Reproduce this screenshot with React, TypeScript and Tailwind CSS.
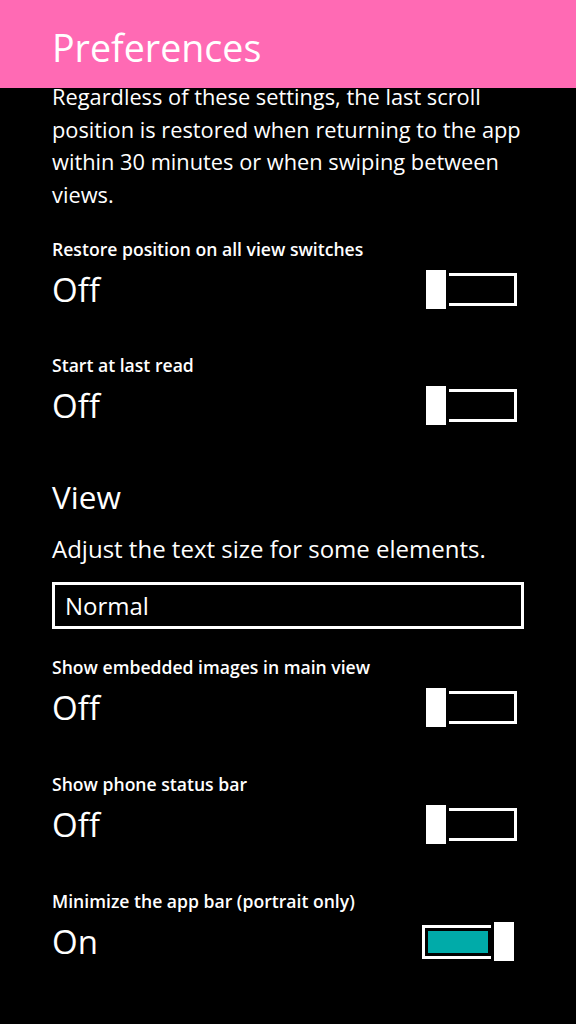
import React from 'react';

const font = { fontFamily: '"Open Sans", "Noto Sans", sans-serif' };

interface ToggleProps {
  on: boolean;
}

const ToggleSwitch = ({ on }: ToggleProps) => {
  if (on) {
    return (
      <div className="ml-auto mr-[10px] flex items-center">
        <div className="h-[34px] w-[69px] border-[3px] border-r-0 border-white p-[3px]">
          <div className="h-full w-full bg-[#00aba9]" />
        </div>
        <div className="ml-[3px] h-[39px] w-[20px] bg-white" />
      </div>
    );
  }
  return (
    <div className="ml-auto mr-[7px] flex items-center">
      <div className="h-[39px] w-[20px] bg-white" />
      <div className="ml-[3px] h-[33px] w-[68px] border-[3px] border-l-0 border-white" />
    </div>
  );
};

interface SettingProps {
  label: string;
  on?: boolean;
  className?: string;
}

const ToggleSetting = ({ label, on = false, className = '' }: SettingProps) => (
  <div className={className}>
    <div className="text-[17.6px] font-semibold leading-[22px]">{label}</div>
    <div className="mt-[10px] flex h-[39px] items-center">
      <span className="text-[33px] leading-[39px]">{on ? 'On' : 'Off'}</span>
      <ToggleSwitch on={on} />
    </div>
  </div>
);

export default function App() {
  return (
    <div className="min-h-[1024px] w-[576px] overflow-hidden bg-black text-white" style={font}>
      {/* Page title bar */}
      <header className="relative z-10 h-[88px] bg-[#ff6ab4] px-[52px] pt-[24px]">
        <h1 className="text-[37.6px] leading-[48px]">Preferences</h1>
      </header>

      <main className="px-[52px]">
        <p className="-mt-[7px] w-[490px] text-[21.8px] leading-[32.6px]">
          Regardless of these settings, the last scroll position is restored when returning to the app within 30
          minutes or when swiping between views.
        </p>

        <ToggleSetting className="mt-[27px]" label="Restore position on all view switches" />
        <ToggleSetting className="mt-[45px]" label="Start at last read" />

        <h2 className="mt-[52px] text-[31.5px] leading-[40px]">View</h2>
        <p className="mt-[17px] text-[24px] leading-[30px]">Adjust the text size for some elements.</p>

        <div className="mt-[18px] h-[47px] border-[3px] border-white pl-[10px] pt-[1px] text-[24px] leading-[40px]">
          Normal
        </div>

        <ToggleSetting className="mt-[27px]" label="Show embedded images in main view" />
        <ToggleSetting className="mt-[46px]" label="Show phone status bar" />
        <ToggleSetting className="mt-[46px]" label="Minimize the app bar (portrait only)" on />
      </main>
    </div>
  );
}
